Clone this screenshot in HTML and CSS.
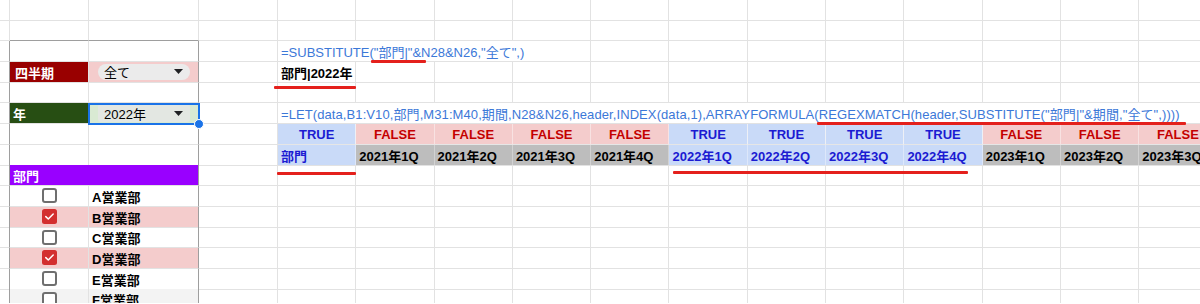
FILE: index.html
```html
<!DOCTYPE html>
<html lang="ja">
<head>
<meta charset="utf-8">
<title>Sheet</title>
<link rel="stylesheet" href="styles.css">
</head>
<body>
<div class="sheet">
  <div class="row">
    <div class="c"></div><div class="c"></div><div class="c"></div><div class="c"></div><div class="c"></div><div class="c"></div><div class="c"></div><div class="c"></div><div class="c"></div><div class="c"></div><div class="c"></div><div class="c"></div><div class="c"></div><div class="c"></div><div class="c"></div><div class="c"></div>
  </div>
  <div class="row">
    <div class="c"></div><div class="c pt"></div><div class="c pt"></div><div class="c"></div><div class="c"></div><div class="c"></div><div class="c"></div><div class="c"></div><div class="c"></div><div class="c"></div><div class="c"></div><div class="c"></div><div class="c"></div><div class="c"></div><div class="c"></div><div class="c"></div>
  </div>
  <div class="row">
    <div class="c pl"></div><div class="c"></div><div class="c pr"></div><div class="c"></div>
    <div class="c s4 formula">=SUBSTITUTE("部門|"&amp;N28&amp;N26,"全て",)</div>
    <div class="c"></div><div class="c"></div><div class="c"></div><div class="c"></div><div class="c"></div><div class="c"></div><div class="c"></div><div class="c"></div>
  </div>
  <div class="row">
    <div class="c pl"></div>
    <div class="c lbl-q">四半期</div>
    <div class="c pr pink chipcell"><div class="chip"><span>全て</span><svg class="tri" width="9" height="5" viewBox="0 0 9 5"><path d="M0 0H9L4.5 5Z"/></svg></div></div>
    <div class="c"></div>
    <div class="c b">部門|2022年</div>
    <div class="c"></div><div class="c"></div><div class="c"></div><div class="c"></div><div class="c"></div><div class="c"></div><div class="c"></div><div class="c"></div><div class="c"></div><div class="c"></div><div class="c"></div>
  </div>
  <div class="row">
    <div class="c pl"></div><div class="c"></div><div class="c pr"></div><div class="c"></div><div class="c"></div><div class="c"></div><div class="c"></div><div class="c"></div><div class="c"></div><div class="c"></div><div class="c"></div><div class="c"></div><div class="c"></div><div class="c"></div><div class="c"></div><div class="c"></div>
  </div>
  <div class="row">
    <div class="c pl"></div>
    <div class="c lbl-y">年</div>
    <div class="c pr green chipcell"><div class="chip chip-g"><span>2022年</span><svg class="tri" width="9" height="5" viewBox="0 0 9 5"><path d="M0 0H9L4.5 5Z"/></svg></div></div>
    <div class="c"></div>
    <div class="c s12 formula long">=LET(data,B1:V10,部門,M31:M40,期間,N28&amp;N26,header,INDEX(data,1),ARRAYFORMULA(REGEXMATCH(header,SUBSTITUTE("部門|"&amp;期間,"全て",))))</div>
  </div>
  <div class="row">
    <div class="c pl"></div><div class="c"></div><div class="c pr"></div><div class="c"></div>
    <div class="c t">TRUE</div>
    <div class="c f">FALSE</div><div class="c f">FALSE</div><div class="c f">FALSE</div><div class="c f">FALSE</div>
    <div class="c t">TRUE</div><div class="c t">TRUE</div><div class="c t">TRUE</div><div class="c t">TRUE</div>
    <div class="c f">FALSE</div><div class="c f">FALSE</div><div class="c f">FALSE</div>
  </div>
  <div class="row">
    <div class="c pl"></div><div class="c"></div><div class="c pr"></div><div class="c"></div>
    <div class="c tb">部門</div>
    <div class="c g">2021年1Q</div><div class="c g">2021年2Q</div><div class="c g">2021年3Q</div><div class="c g">2021年4Q</div>
    <div class="c tb">2022年1Q</div><div class="c tb">2022年2Q</div><div class="c tb">2022年3Q</div><div class="c tb">2022年4Q</div>
    <div class="c g">2023年1Q</div><div class="c g">2023年2Q</div><div class="c g">2023年3Q</div>
  </div>
  <div class="row">
    <div class="c pl"></div>
    <div class="c s2 pr dept">部門</div>
    <div class="c"></div><div class="c"></div><div class="c"></div><div class="c"></div><div class="c"></div><div class="c"></div><div class="c"></div><div class="c"></div><div class="c"></div><div class="c"></div><div class="c"></div><div class="c"></div><div class="c"></div>
  </div>
  <div class="row">
    <div class="c pl"></div>
    <div class="c box"><svg class="cb" width="15" height="15" viewBox="0 0 15 15"><rect x="1" y="1" width="13" height="13" rx="2" class="cb-off"/></svg></div>
    <div class="c pr b">A営業部</div>
    <div class="c"></div><div class="c"></div><div class="c"></div><div class="c"></div><div class="c"></div><div class="c"></div><div class="c"></div><div class="c"></div><div class="c"></div><div class="c"></div><div class="c"></div><div class="c"></div><div class="c"></div>
  </div>
  <div class="row">
    <div class="c pl"></div>
    <div class="c box pink"><svg class="cb" width="15" height="15" viewBox="0 0 15 15"><rect x="0" y="0" width="15" height="15" rx="2.5" class="cb-on"/><path d="M3.8 7.6L6.3 10L11.2 5" class="ck"/></svg></div>
    <div class="c pr b pink">B営業部</div>
    <div class="c"></div><div class="c"></div><div class="c"></div><div class="c"></div><div class="c"></div><div class="c"></div><div class="c"></div><div class="c"></div><div class="c"></div><div class="c"></div><div class="c"></div><div class="c"></div><div class="c"></div>
  </div>
  <div class="row">
    <div class="c pl"></div>
    <div class="c box"><svg class="cb" width="15" height="15" viewBox="0 0 15 15"><rect x="1" y="1" width="13" height="13" rx="2" class="cb-off"/></svg></div>
    <div class="c pr b">C営業部</div>
    <div class="c"></div><div class="c"></div><div class="c"></div><div class="c"></div><div class="c"></div><div class="c"></div><div class="c"></div><div class="c"></div><div class="c"></div><div class="c"></div><div class="c"></div><div class="c"></div><div class="c"></div>
  </div>
  <div class="row">
    <div class="c pl"></div>
    <div class="c box pink"><svg class="cb" width="15" height="15" viewBox="0 0 15 15"><rect x="0" y="0" width="15" height="15" rx="2.5" class="cb-on"/><path d="M3.8 7.6L6.3 10L11.2 5" class="ck"/></svg></div>
    <div class="c pr b pink">D営業部</div>
    <div class="c"></div><div class="c"></div><div class="c"></div><div class="c"></div><div class="c"></div><div class="c"></div><div class="c"></div><div class="c"></div><div class="c"></div><div class="c"></div><div class="c"></div><div class="c"></div><div class="c"></div>
  </div>
  <div class="row">
    <div class="c pl"></div>
    <div class="c box"><svg class="cb" width="15" height="15" viewBox="0 0 15 15"><rect x="1" y="1" width="13" height="13" rx="2" class="cb-off"/></svg></div>
    <div class="c pr b">E営業部</div>
    <div class="c"></div><div class="c"></div><div class="c"></div><div class="c"></div><div class="c"></div><div class="c"></div><div class="c"></div><div class="c"></div><div class="c"></div><div class="c"></div><div class="c"></div><div class="c"></div><div class="c"></div>
  </div>
  <div class="row">
    <div class="c pl"></div>
    <div class="c box grey"><svg class="cb" width="15" height="15" viewBox="0 0 15 15"><rect x="1" y="1" width="13" height="13" rx="2" class="cb-off"/></svg></div>
    <div class="c pr b grey">F営業部</div>
    <div class="c"></div><div class="c"></div><div class="c"></div><div class="c"></div><div class="c"></div><div class="c"></div><div class="c"></div><div class="c"></div><div class="c"></div><div class="c"></div><div class="c"></div><div class="c"></div><div class="c"></div>
  </div>

  <div class="sel"></div>
  <div class="mark m1"></div>
  <div class="mark m2"></div>
  <div class="mark m3"></div>
  <div class="mark m4"></div>
  <div class="mark m5"></div>
</div>
</body>
</html>
```

FILE: styles.css
```css
* {
  box-sizing: border-box;
  margin: 0;
  padding: 0;
}

body {
  margin: 0;
  background: #ffffff;
  font-family: "Liberation Sans", Arial, "Noto Sans CJK JP", sans-serif;
  font-size: 13px;
  color: #000000;
  overflow: hidden;
}

.sheet {
  position: relative;
  width: 1200px;
  height: 304px;
  overflow: hidden;
  border-top: 1px solid #e2e2e2;
  margin-top: -1px;
}

.row {
  display: grid;
  grid-template-columns: 10px 79px 110px 79px repeat(12, 78.3px);
  height: 20.67px;
}

.c {
  border-right: 1px solid #e2e2e2;
  border-bottom: 1px solid #e2e2e2;
  height: 100%;
  padding: 1px 3px 0 3px;
  white-space: nowrap;
  display: flex;
  align-items: center;
  min-width: 0;
}

.s2 { grid-column: span 2; }
.s4 { grid-column: span 4; }
.s12 { grid-column: span 12; }

.pt { border-bottom-color: #9e9e9e; }
.pl { border-right-color: #9e9e9e; }
.pr { border-right-color: #9e9e9e; }

.b { font-weight: bold; }

.formula {
  color: #3c78d8;
}

.long {
  letter-spacing: 0.09px;
}

.lbl-q {
  background: #990000;
  color: #ffffff;
  font-weight: bold;
  padding-left: 5px;
}

.lbl-y {
  background: #274e13;
  color: #ffffff;
  font-weight: bold;
  padding-left: 3px;
}

.dept {
  background: #9900ff;
  color: #ffffff;
  font-weight: bold;
  padding-left: 3px;
}

.pink { background: #f4cccc; }
.green { background: #d9ead3; }
.grey { background: #f3f3f3; }

.chipcell {
  padding: 0 8px 0 9px;
}

.chip {
  flex: 1;
  height: 16px;
  border-radius: 8px;
  background: #ebebeb;
  display: flex;
  align-items: center;
  justify-content: space-between;
  padding: 0 7px 0 6px;
}

.chip-g {
  background: #e3e7e2;
  border-radius: 3px;
  height: 18px;
}

.tri {
  fill: #202124;
}

.t,
.f {
  font-weight: bold;
  justify-content: center;
  border-right-color: #eef0f6;
  border-bottom-color: #e6e6e6;
}

.t {
  background: #c9daf8;
  color: #1b1bd2;
}

.f {
  background: #f4cccc;
  color: #c40000;
  border-right-color: #f8e2e2;
}

.tb {
  background: #c9daf8;
  color: #1b1bd2;
  font-weight: bold;
  border-right-color: #dde7fa;
}

.g {
  background: #bdbdbd;
  font-weight: bold;
  border-right-color: #d2d2d2;
}

.box {
  justify-content: center;
  padding: 0 0 0 1px;
}

.cb {
  display: block;
}

.cb-off {
  fill: #ffffff;
  stroke: #6f6f6f;
  stroke-width: 2;
}

.cb-on {
  fill: #d32f2f;
}

.ck {
  fill: none;
  stroke: #ffffff;
  stroke-width: 1.5;
  stroke-linecap: round;
  stroke-linejoin: round;
}

.sel {
  position: absolute;
  left: 88px;
  top: 102.5px;
  width: 112px;
  height: 22.5px;
  border: 2px solid #1a73e8;
}

.sel::after {
  content: "";
  position: absolute;
  right: -6px;
  bottom: -6px;
  width: 8px;
  height: 8px;
  border-radius: 50%;
  background: #1a73e8;
  border: 1px solid #ffffff;
}

.mark {
  position: absolute;
  height: 3px;
  background: #e4201c;
  border-radius: 1px;
}

.m1 { left: 371px; top: 60px; width: 55px; }
.m2 { left: 274px; top: 86px; width: 82px; }
.m3 { left: 817px; top: 122px; width: 369px; }
.m4 { left: 277px; top: 172px; width: 79px; }
.m5 { left: 673px; top: 171px; width: 295px; }
```
